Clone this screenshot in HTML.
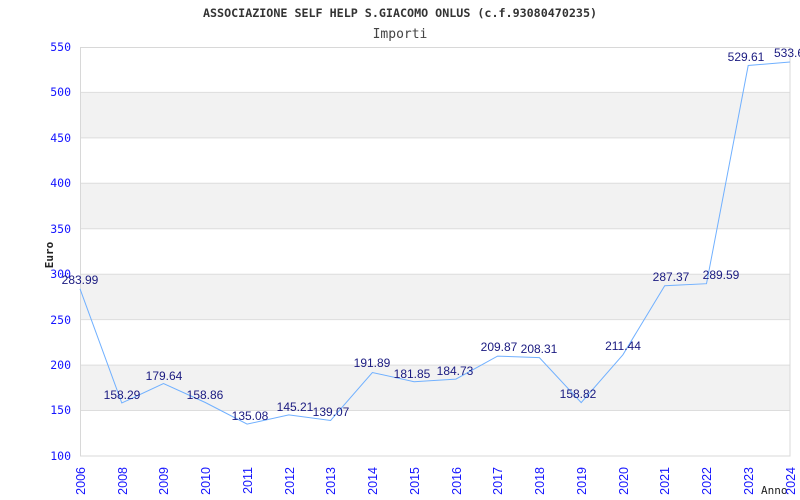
<!DOCTYPE html>
<html><head><style>body{margin:0;background:#fff}svg{display:block}</style></head><body>
<svg width="800" height="500" xmlns="http://www.w3.org/2000/svg">
<text x="400" y="17" text-anchor="middle" font-family="DejaVu Sans Mono, monospace" font-weight="bold" font-size="11.7" fill="#333">ASSOCIAZIONE SELF HELP S.GIACOMO ONLUS (c.f.93080470235)</text>
<text x="400" y="38" text-anchor="middle" font-family="DejaVu Sans Mono, monospace" font-size="13" fill="#444">Importi</text>
<g fill="#f2f2f2">
<rect x="80" y="92.4" width="710" height="45.4"/>
<rect x="80" y="183.3" width="710" height="45.4"/>
<rect x="80" y="274.2" width="710" height="45.4"/>
<rect x="80" y="365.1" width="710" height="45.4"/>
</g>
<g stroke="#ddd" stroke-width="1">
<line x1="80" y1="92.4" x2="790" y2="92.4"/><line x1="80" y1="137.9" x2="790" y2="137.9"/>
<line x1="80" y1="183.3" x2="790" y2="183.3"/><line x1="80" y1="228.8" x2="790" y2="228.8"/>
<line x1="80" y1="274.2" x2="790" y2="274.2"/><line x1="80" y1="319.6" x2="790" y2="319.6"/>
<line x1="80" y1="365.1" x2="790" y2="365.1"/><line x1="80" y1="410.5" x2="790" y2="410.5"/>
</g>
<rect x="80.5" y="47.5" width="709.5" height="408.5" fill="none" stroke="#d8d8d8"/>
<g font-family="DejaVu Sans Mono, monospace" font-size="11.5" fill="#1515ff" text-anchor="end">
<text x="71" y="51">550</text><text x="71" y="96">500</text><text x="71" y="142">450</text>
<text x="71" y="187">400</text><text x="71" y="233">350</text><text x="71" y="278">300</text>
<text x="71" y="324">250</text><text x="71" y="369">200</text><text x="71" y="414">150</text>
<text x="71" y="460">100</text>
</g>
<text transform="translate(53,255) rotate(-90)" text-anchor="middle" font-family="DejaVu Sans Mono, monospace" font-weight="bold" font-size="11" fill="#222">Euro</text>
<text x="761" y="494" font-family="DejaVu Sans Mono, monospace" font-size="11" fill="#222">Anno</text>
<g font-family="Liberation Sans, sans-serif" font-size="12.5" fill="#1515ff" text-anchor="end">
<text transform="translate(85,467) rotate(-90)">2006</text>
<text transform="translate(127,467) rotate(-90)">2008</text>
<text transform="translate(168,467) rotate(-90)">2009</text>
<text transform="translate(210,467) rotate(-90)">2010</text>
<text transform="translate(252,467) rotate(-90)">2011</text>
<text transform="translate(294,467) rotate(-90)">2012</text>
<text transform="translate(335,467) rotate(-90)">2013</text>
<text transform="translate(377,467) rotate(-90)">2014</text>
<text transform="translate(419,467) rotate(-90)">2015</text>
<text transform="translate(461,467) rotate(-90)">2016</text>
<text transform="translate(502,467) rotate(-90)">2017</text>
<text transform="translate(544,467) rotate(-90)">2018</text>
<text transform="translate(586,467) rotate(-90)">2019</text>
<text transform="translate(628,467) rotate(-90)">2020</text>
<text transform="translate(669,467) rotate(-90)">2021</text>
<text transform="translate(711,467) rotate(-90)">2022</text>
<text transform="translate(753,467) rotate(-90)">2023</text>
<text transform="translate(795,467) rotate(-90)">2024</text>
</g>
<polyline fill="none" stroke="#70b0ff" stroke-width="1" points="80,288.8 121.8,403 163.5,383.6 205.3,402.5 247.1,424.1 288.8,414.9 330.6,420.5 372.4,372.5 414.1,381.7 455.9,379.1 497.6,356.1 539.4,357.6 581.2,402.6 622.9,354.8 664.7,285.7 706.5,283.7 748.2,65.5 790,62"/>
<g font-family="Liberation Sans, sans-serif" font-size="12" fill="#1a1a80" text-anchor="middle">
<text x="80" y="284">283.99</text>
<text x="122" y="399">158.29</text>
<text x="164" y="380">179.64</text>
<text x="205" y="399">158.86</text>
<text x="250" y="420">135.08</text>
<text x="295" y="411">145.21</text>
<text x="331" y="416">139.07</text>
<text x="372" y="367">191.89</text>
<text x="412" y="378">181.85</text>
<text x="455" y="375">184.73</text>
<text x="499" y="351">209.87</text>
<text x="539" y="353">208.31</text>
<text x="578" y="398">158.82</text>
<text x="623" y="350">211.44</text>
<text x="671" y="281">287.37</text>
<text x="721" y="279">289.59</text>
<text x="746" y="61">529.61</text>
<text x="789" y="57">533.6</text>
</g>
</svg>
</body></html>
